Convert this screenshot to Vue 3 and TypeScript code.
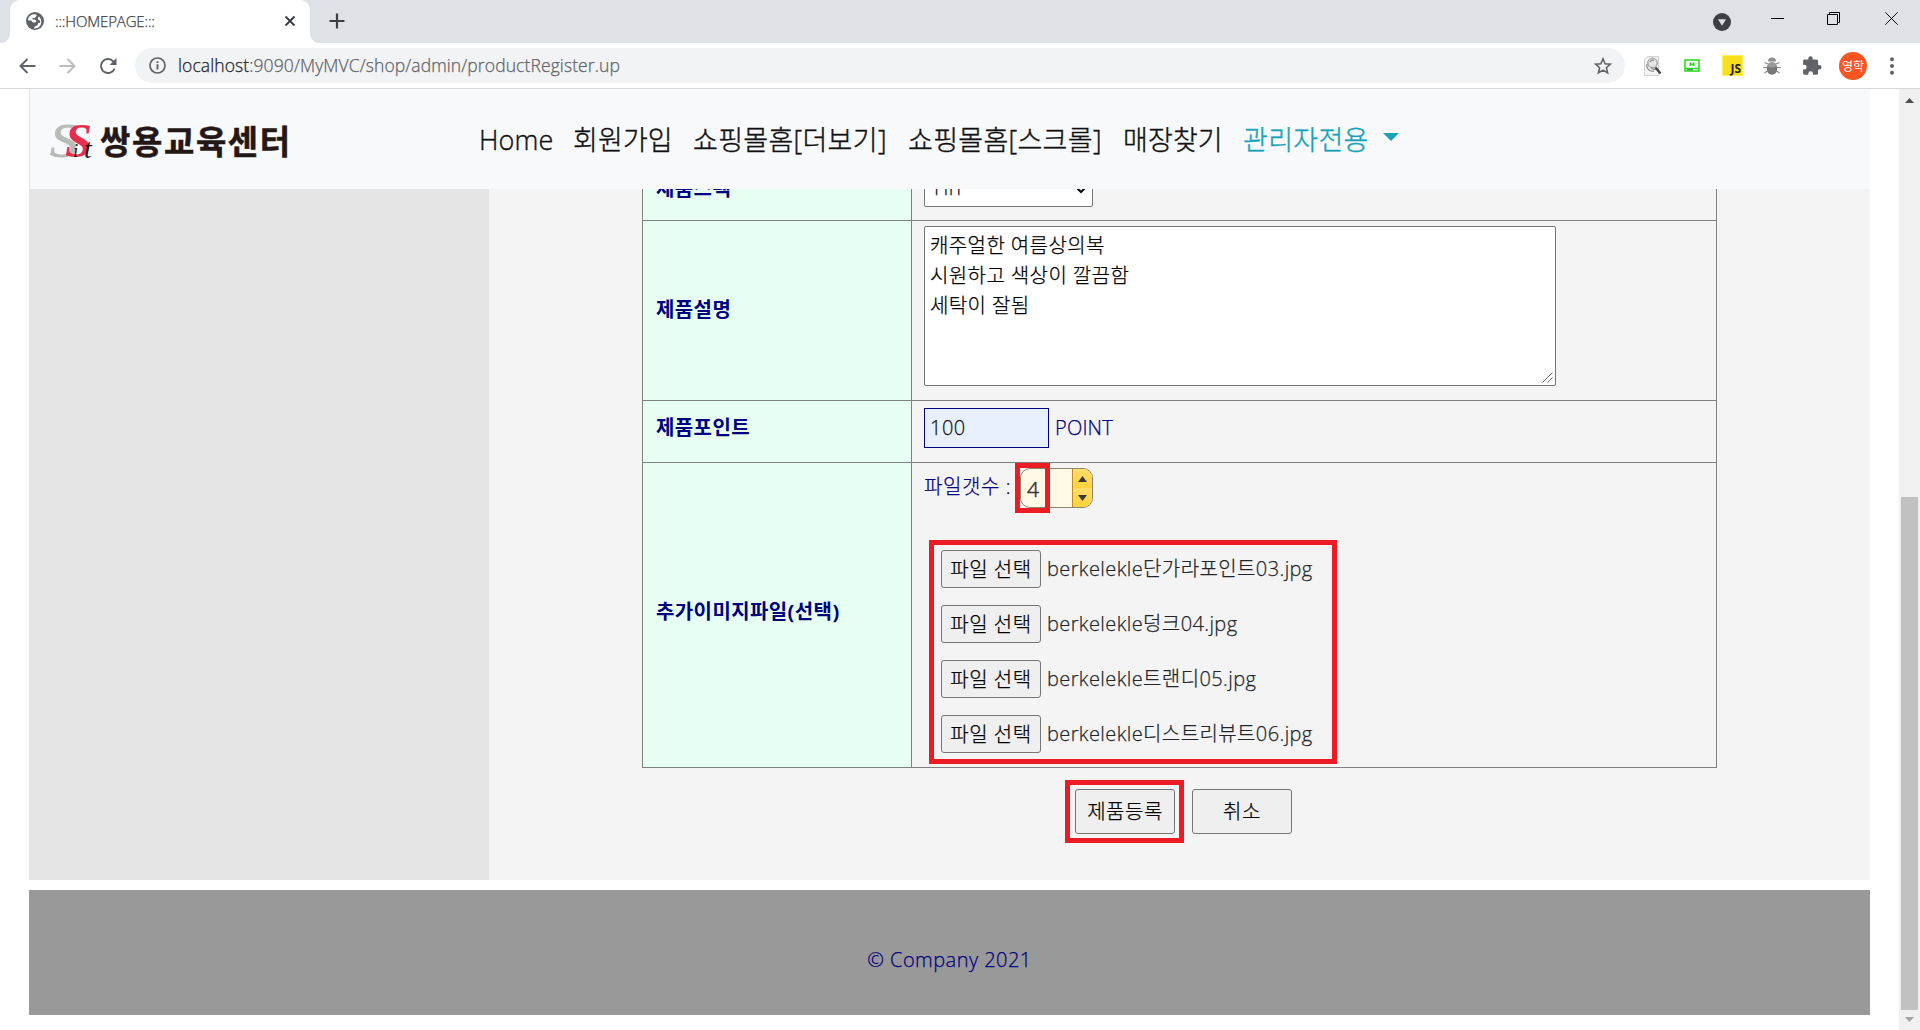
<script setup lang="ts">
const navItems: { label: string; cls: string }[] = [
  { label: 'Home', cls: 'n1' },
  { label: '회원가입', cls: 'n2' },
  { label: '쇼핑몰홈[더보기]', cls: 'n3' },
  { label: '쇼핑몰홈[스크롤]', cls: 'n4' },
  { label: '매장찾기', cls: 'n5' },
]
const files: string[] = [
  'berkelekle단가라포인트03.jpg',
  'berkelekle덩크04.jpg',
  'berkelekle트랜디05.jpg',
  'berkelekle디스트리뷰트06.jpg',
]
const description = '캐주얼한 여름상의복\n시원하고 색상이 깔끔함\n세탁이 잘됨'
</script>

<template>
  <div class="window">
    <div class="tabstrip">
      <div class="tab">
        <svg class="globe" width="18" height="18" viewBox="0 0 18 18">
          <circle cx="9" cy="9" r="9" fill="#5f6368" />
          <path d="M8 2.2C4.800 2.500 2.300 4.800 1.900 8.200l3.300.4 1.700 1.900h2.300l1.300-1.300-1.600-1.800H6.500V5.900h2.200l1.800-2V2.500zM13 4.500l-1.200 1.700.5 1.600 2 .9-.4 2-1.800.6-.8 2.200-2.800 1.300-.4 1.600c3.700.4 7-2.300 7.200-6.200.1-2.300-.8-4.300-2.300-5.700z" fill="#fff" />
        </svg>
        <span class="tab-title">:::HOMEPAGE:::</span>
        <svg class="tab-close" width="12" height="12" viewBox="0 0 12 12"><path d="M1.500 1.500l9 9M10.500 1.500l-9 9" stroke="#3c4043" stroke-width="2" /></svg>
      </div>
      <svg class="newtab" width="16" height="16" viewBox="0 0 16 16"><path d="M8 .5v15M.5 8h15" stroke="#3c4043" stroke-width="2.200" /></svg>
      <div class="winctl">
        <svg class="w-drop" width="18" height="18" viewBox="0 0 18 18"><circle cx="9" cy="9" r="9" fill="#3c4043" /><path d="M5 6.300h8L9 12.800z" fill="#dee1e6" /></svg>
        <svg class="w-min" width="13" height="13" viewBox="0 0 13 13"><path d="M0 6.500h13" stroke="#000" /></svg>
        <svg class="w-max" width="13" height="13" viewBox="0 0 13 13"><path d="M.5 2.500h10v10H.5zM2.500 2.500v-2h10v10h-2" fill="none" stroke="#000" /></svg>
        <svg class="w-close" width="13" height="13" viewBox="0 0 13 13"><path d="M.3 .3l12.400 12.400M12.700 .3L.3 12.700" stroke="#000" /></svg>
      </div>
    </div>

    <div class="toolbar">
      <svg class="t-back" width="17" height="16" viewBox="0 0 17 16"><path d="M16.500 8H1.500M8.500 1L1.500 8l7 7" fill="none" stroke="#5f6368" stroke-width="2" /></svg>
      <svg class="t-fwd" width="17" height="16" viewBox="0 0 17 16"><path d="M.5 8h15M8.500 1l7 7-7 7" fill="none" stroke="#babcbe" stroke-width="2" /></svg>
      <svg class="t-reload" width="18" height="18" viewBox="0 0 18 18"><path d="M15.600 11.500A7 7 0 1 1 14.200 4.300L16 6" fill="none" stroke="#5f6368" stroke-width="2" /><path d="M17.500 1v7h-7z" fill="#5f6368" /></svg>
      <div class="omnibox">
        <svg width="17" height="17" viewBox="0 0 17 17"><circle cx="8.500" cy="8.500" r="7.500" fill="none" stroke="#5f6368" stroke-width="1.700" /><path d="M8.500 7.300v5.200M8.500 4.200v1.900" stroke="#5f6368" stroke-width="1.900" /></svg>
        <span class="url"><b>localhost</b>:9090/MyMVC/shop/admin/productRegister.up</span>
        <svg class="star" width="18" height="18" viewBox="0 0 18 18"><path d="M9 1.800l2.100 4.900 5.300.5-4 3.500 1.200 5.200L9 13.100l-4.600 2.800 1.200-5.200-4-3.500 5.300-.5z" fill="none" stroke="#5f6368" stroke-width="1.600" /></svg>
      </div>
      <svg class="e-search" width="18" height="20" viewBox="0 0 18 20">
        <path d="M3.500 .5h11v19H.5v-16z" fill="#f4f4f4" stroke="#d0d0d0" />
        <circle cx="8.500" cy="7" r="4.700" fill="#e4e4e4" stroke="#aaa" stroke-width="1.500" />
        <path d="M6 6a3 3 0 0 1 4-1.500M3 8c-1 4 2 8 7 7M7 11c1 2 3 3 5 2" fill="none" stroke="#929292" stroke-width="1.400" />
        <path d="M11.500 11.500l5 6" stroke="#444" stroke-width="2.400" />
      </svg>
      <svg class="e-green" width="16" height="13" viewBox="0 0 16 13"><path d="M1 1h14v11H1zM1 9.500h14" fill="none" stroke="#1fdc10" stroke-width="1.500" /><path d="M6.200 3.500v3.500M9.800 3.500v3.500M6 4.500l4 1.500" stroke="#1fdc10" stroke-width="1.400" /><path d="M3 10.700h6" stroke="#168a0c" /></svg>
      <div class="e-js"><span>JS</span></div>
      <svg class="e-bug" width="18" height="18" viewBox="0 0 18 18">
        <path d="M5 7L1.500 5.500M13 7l3.500-1.500M4 10.500H.3M14 10.500h3.700M5 13.500L1.500 16M13 13.500l3.500 2.500" stroke="#888" stroke-width="1.200" />
        <path d="M5 4.500a4 4 0 0 1 8 0z" fill="#8d8d8d" /><rect x="4" y="5.200" width="10" height="12.500" rx="5" fill="#777" /><rect x="5" y="5.500" width="8" height="5" rx="3" fill="#999" />
      </svg>
      <svg class="e-puzzle" width="19" height="19" viewBox="0 0 19 19"><path d="M16.300 9h-1.200V5.200c0-.9-.7-1.600-1.600-1.600H9.700V2.400a2.200 2.200 0 0 0-4.400 0v1.200H1.700C.8 3.600.1 4.300.1 5.200v3.600h1.200a2.300 2.300 0 0 1 0 4.700H.1v3.600c0 .9.700 1.600 1.600 1.600h3.600v-1.200a2.300 2.300 0 0 1 4.700 0v1.200h3.500c.9 0 1.600-.7 1.600-1.600v-3.700h1.200a2.200 2.200 0 0 0 0-4.400z" fill="#5f6368" /></svg>
      <div class="avatar">영학</div>
      <svg class="e-menu" width="4" height="18" viewBox="0 0 4 18"><g fill="#5f6368"><circle cx="2" cy="2.200" r="2" /><circle cx="2" cy="9" r="2" /><circle cx="2" cy="15.700" r="2" /></g></svg>
    </div>

    <div class="viewport">
      <div class="page">
        <nav class="navbar">
          <div class="logo">
            <svg width="46" height="60" viewBox="0 -11 46 60">
              <g font-family="Liberation Serif, serif" font-style="italic">
                <text x="1" y="34" font-size="49" fill="#b9bbb8" stroke="#b9bbb8" stroke-width=".8" textLength="28" lengthAdjust="spacingAndGlyphs">S</text>
                <text x="16" y="34" font-size="49" fill="#e62e4d" textLength="27" lengthAdjust="spacingAndGlyphs" font-weight="bold">S</text>
                <text x="24" y="34" font-size="19" fill="#231815">i</text>
                <text x="35" y="35" font-size="28" fill="#231815">t</text>
              </g>
            </svg>
            <span>쌍용교육센터</span>
          </div>
          <span v-for="n in navItems" :key="n.label" class="nav-item" :class="n.cls">{{ n.label }}</span>
          <span class="nav-item n6">관리자전용</span>
          <i class="caret"></i>
        </nav>

        <div class="body">
          <aside></aside>
          <main>
            <div class="grid">
              <div class="row r1">
                <div class="th"><span>제품스펙</span></div>
                <div class="td">
                  <div class="select"><span>HIT</span><svg width="10" height="7" viewBox="0 0 10 7"><path d="M1 1l4 4 4-4" fill="none" stroke="#111" stroke-width="2.200" /></svg></div>
                </div>
              </div>
              <div class="row r2">
                <div class="th"><span>제품설명</span></div>
                <div class="td">
                  <div class="textarea">{{ description }}<svg class="grip" width="11" height="11" viewBox="0 0 11 11"><path d="M.5 10.500l10-10M5.500 10.500l5-5" stroke="#555" stroke-width=".9" /></svg></div>
                </div>
              </div>
              <div class="row r3">
                <div class="th"><span>제품포인트</span></div>
                <div class="td"><div class="input">100</div><span class="point">POINT</span></div>
              </div>
              <div class="row r4">
                <div class="th"><span>추가이미지파일(선택)</span></div>
                <div class="td">
                  <div class="count">
                    <span class="count-label">파일갯수 :</span>
                    <div class="spinner">
                      <span>4</span>
                      <div class="arrows">
                        <div><svg width="9" height="6" viewBox="0 0 9 6"><path d="M0 6L4.500 0 9 6z" fill="#3d3a33" /></svg></div>
                        <div><svg width="9" height="6" viewBox="0 0 9 6"><path d="M0 0h9L4.500 6z" fill="#3d3a33" /></svg></div>
                      </div>
                      <i class="mark"></i>
                    </div>
                  </div>
                  <div class="files">
                    <div v-for="f in files" :key="f" class="file"><span class="btn pick">파일 선택</span><span class="fname">{{ f }}</span></div>
                  </div>
                </div>
              </div>
            </div>
            <div class="actions">
              <div class="marked"><span class="btn act">제품등록</span></div>
              <span class="btn act">취소</span>
            </div>
          </main>
        </div>
        <footer>© Company 2021</footer>
      </div>
      <div class="scrollbar">
        <svg width="9" height="5" viewBox="0 0 9 5"><path d="M0 5L4.500 0 9 5z" fill="#505050" /></svg>
        <div class="thumb"></div>
        <svg width="9" height="5" viewBox="0 0 9 5"><path d="M0 0h9L4.500 5z" fill="#a3a3a3" /></svg>
      </div>
    </div>
  </div>
</template>

<style>
body { margin: 0; overflow: hidden; background: #fff; }
</style>

<style scoped>
* { box-sizing: border-box; }
svg { display: block; flex: none; }
.window { width: 1920px; height: 1030px; display: flex; flex-direction: column; overflow: hidden; font-family: "Open Sans", "Noto Sans CJK KR", sans-serif; font-weight: 300; -webkit-text-stroke: 0.25px; font-size: 20px; color: #000080; white-space: nowrap; }

.tabstrip { height: 43px; flex: none; background: #dee1e6; display: flex; align-items: flex-start; padding-left: 10px; }
.tab { position: relative; width: 300px; height: 43px; background: #fff; border-radius: 10px 10px 0 0; display: flex; align-items: center; padding: 0 14px 1px 16px; }
.tab::before, .tab::after { content: ""; position: absolute; bottom: 0; width: 10px; height: 10px; }
.tab::before { left: -10px; background: radial-gradient(circle at 0 0, #dee1e6 10px, #fff 10.5px); }
.tab::after { right: -10px; background: radial-gradient(circle at 100% 0, #dee1e6 10px, #fff 10.5px); }
.tab-title { margin-left: 11px; font-size: 15px; letter-spacing: -0.15px; color: #3c4043; flex: 1; }
.newtab { margin: 13px 0 0 19px; }
.winctl { margin-left: auto; display: flex; }
.w-drop { margin: 13px 40px 0 0; }
.w-min { margin: 12px 43px 0 0; }
.w-max { margin: 12px 45px 0 0; }
.w-close { margin: 12px 22px 0 0; }

.toolbar { height: 46px; flex: none; border-bottom: 1px solid #d5d7da; display: flex; align-items: center; padding: 0 21px 0 19px; background: #fff; }
.t-fwd { margin-left: 23px; }
.t-reload { margin-left: 23px; }
.omnibox { margin-left: 18px; width: 1490px; height: 35px; border-radius: 18px; background: #f1f3f4; display: flex; align-items: center; padding: 0 14px; }
.url { margin-left: 12px; font-size: 17.500px; letter-spacing: 0.1px; color: #5f6368; flex: 1; padding-bottom: 1px; }
.url b { font-weight: 300; color: #202124; }
.star { margin-right: -1px; }
.e-search { margin-left: 19px; }
.e-green { margin-left: 22px; }
.e-js { margin-left: 22px; width: 21px; height: 21px; background: #f7df1e; border: 1px solid #ffee58; color: #222; display: flex; justify-content: flex-end; align-items: flex-end; -webkit-text-stroke: 0; }
.e-js span { font: 700 12px/13px "Open Sans", sans-serif; padding-right: 1px; }
.e-bug { margin-left: 20px; }
.e-puzzle { margin-left: 22px; }
.avatar { margin-left: 17px; width: 28px; height: 28px; border-radius: 50%; background: #fa5420; color: #fff; font-size: 12px; font-weight: 400; display: flex; align-items: center; justify-content: center; -webkit-text-stroke: 0; }
.e-menu { margin-left: 23px; }

.viewport { flex: 1; display: flex; min-height: 0; }
.page { width: 1899px; padding: 0 29px; }
.navbar { height: 100px; background: #f8f9fb; border-left: 1px solid #e3e4e6; display: flex; align-items: center; font-size: 27px; color: #111; -webkit-text-stroke: 0.4px; }
.logo { width: 449px; padding-left: 19px; display: flex; align-items: center; padding-top: 6px; -webkit-text-stroke: 0; }
.logo span { margin-left: 5px; margin-top: -4px; font: 700 33px/38px "Noto Sans CJK KR", sans-serif; color: #231815; letter-spacing: 1.600px; -webkit-text-stroke: 0.5px; }
.nav-item { flex: none; line-height: 40px; padding-top: 1px; letter-spacing: 0.1px; }
.n1 { width: 94px; }
.n2 { width: 120px; }
.n3 { width: 215px; letter-spacing: 0.3px; }
.n4 { width: 215px; letter-spacing: 0.3px; }
.n5 { width: 120px; }
.n6 { width: 140px; color: #17a2b8; letter-spacing: 0.3px; }
.caret { border: 8px solid transparent; border-top-color: #17a2b8; border-bottom: 0; margin-top: -4px; }

.body { display: flex; height: 691px; }
aside { width: 460px; background: #e5e5e5; }
main { flex: 1; background: #f4f4f4; padding-left: 153px; }
.grid { width: 1075px; border: 1px solid #808080; border-top: 0; }
.row { display: flex; border-top: 1px solid #808080; }
.r1 { height: 31px; border-top: 0; overflow: hidden; align-items: flex-end; }
.r2 { height: 180px; }
.r3 { height: 62px; }
.r4 { height: 305px; }
.th { width: 269px; flex: none; background: #e6fff2; border-right: 1px solid #808080; padding-left: 13px; display: flex; align-items: center; font-weight: 700; letter-spacing: 0.4px; -webkit-text-stroke: 0; }
.td { flex: 1; padding-left: 12px; }
.r1 .th, .r1 .td { height: 62px; flex-shrink: 0; }
.r1 .th span { padding-bottom: 4px; }
.r2 .th span { padding-bottom: 4px; }
.r3 .th span { padding-bottom: 10px; }
.r4 .th span { padding-bottom: 9px; }
.select { width: 169px; height: 40px; margin-top: 9px; background: #fff; border: 1px solid #767676; border-radius: 2px; color: #111; display: flex; align-items: center; justify-content: space-between; padding: 0 6px 0 9px; }
.select svg { margin-top: 6px; }
.textarea { position: relative; width: 632px; height: 160px; margin-top: 5px; background: #fff; border: 1px solid #767676; border-radius: 2px; color: #000; line-height: 30px; padding: 4px 5px; white-space: pre; letter-spacing: 0.4px; }
.grip { position: absolute; right: 2px; bottom: 2px; }
.r3 .td { display: flex; align-items: flex-start; padding-top: 7px; }
.input { width: 125px; height: 40px; border: 1px solid #000080; background: #e8f0fe; color: #111; line-height: 38px; padding-left: 5px; letter-spacing: 0.5px; }
.point { line-height: 39px; margin-left: 6px; letter-spacing: 0.2px; }
.count { display: flex; height: 77px; padding-top: 5px; }
.count-label { width: 96px; line-height: 37px; letter-spacing: 0.6px; }
.spinner { position: relative; width: 73px; height: 40px; border: 1px solid #8e846b; border-radius: 10px; background: #fff9e5; color: #333; display: flex; }
.spinner > span { flex: 1; padding-left: 6px; line-height: 40px; font-size: 21px; -webkit-text-stroke: 0.5px; }
.arrows { width: 20px; border-left: 1px solid #c08a20; border-radius: 0 9px 9px 0; overflow: hidden; background: #ffd548; display: flex; flex-direction: column; }
.arrows div { flex: 1; display: flex; align-items: center; justify-content: center; background: linear-gradient(#ffdd6a, #ffd23d); }
.mark { position: absolute; left: -6px; top: -6px; width: 35px; height: 50px; border: 5px solid #ed1c24; }
.files { width: 408px; height: 224px; margin-left: 5px; border: 5px solid #ed1c24; padding: 5px 0 0 7px; display: flex; flex-direction: column; gap: 17px; }
.file { display: flex; height: 38px; align-items: center; }
.btn { background: #efefef; border: 1px solid #767676; border-radius: 3px; color: #000; display: flex; align-items: center; justify-content: center; letter-spacing: 0.5px; padding-bottom: 2px; }
.pick { width: 100px; height: 38px; }
.fname { margin-left: 6px; padding-bottom: 3px; color: #212529; letter-spacing: 0.4px; }
.actions { display: flex; align-items: flex-start; padding: 12px 0 0 423px; }
.marked { width: 119px; height: 63px; border: 5px solid #ed1c24; padding: 4px 0 0 5px; margin-right: 8px; }
.act { width: 100px; height: 45px; }
.actions > .act { margin-top: 9px; }
footer { margin-top: 10px; height: 125px; background: #999; display: flex; align-items: center; justify-content: center; padding-top: 14px; letter-spacing: 0.45px; }

.scrollbar { width: 21px; background: #f0f0f0; padding: 9px 2px 8px; display: flex; flex-direction: column; align-items: center; }
.thumb { width: 17px; height: 513px; margin: auto 0 7px; background: #c1c1c1; }
</style>
